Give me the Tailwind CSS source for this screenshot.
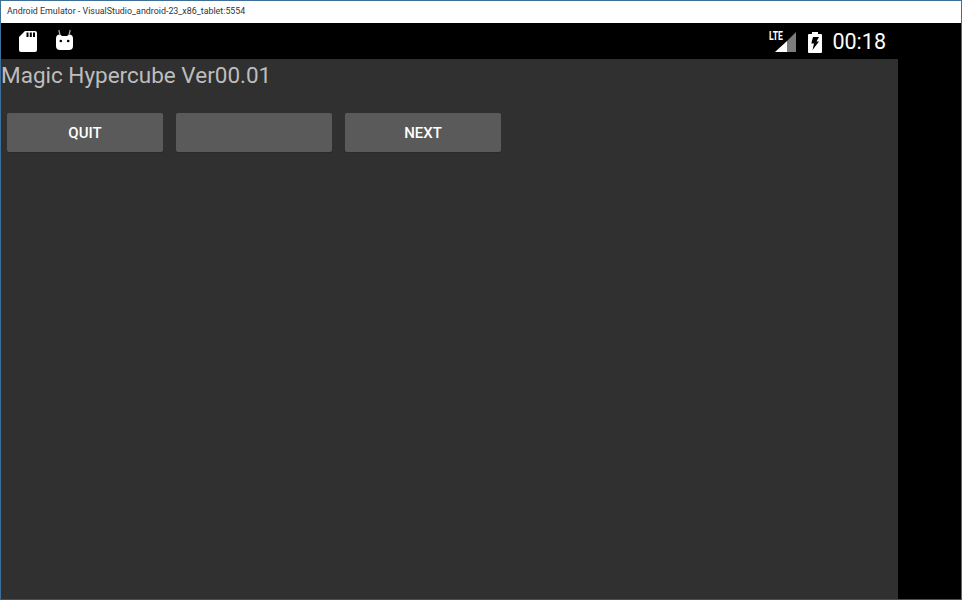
<!DOCTYPE html>
<html lang="en">

<head>
    <meta charset="UTF-8" />
    <meta name="viewport" content="width=device-width, initial-scale=1.0" />
    <title>Android Emulator</title>
    <script src="https://cdn.jsdelivr.net/npm/@tailwindcss/browser@4"></script>
</head>

<body class="bg-black overflow-hidden">
    <div class="w-[962px] h-[600px] flex flex-col border border-[#3f6f96] border-b-[#1f5a8a] font-['Roboto',sans-serif] overflow-hidden">
        <!-- window title bar -->
        <div class="h-[22px] shrink-0 bg-white flex items-center pl-[6px] text-[8.9px] text-[#333] font-['Roboto',sans-serif]">
            Android Emulator - VisualStudio_android-23_x86_tablet:5554
        </div>

        <div class="flex-1 flex flex-col bg-black">
            <!-- status bar -->
            <div class="h-[36px] shrink-0 flex items-center justify-between w-[897px]">
                <div class="flex items-center pl-[18px] gap-[19px]">
                    <svg class="mt-px" width="18" height="21" viewBox="0 0 18 21">
                        <path fill="#fff" d="M6 0h10a2 2 0 0 1 2 2v17a2 2 0 0 1-2 2H2a2 2 0 0 1-2-2V6z" />
                        <path fill="#000" d="M7.500 1.500h2v4.500h-2zM10.800 1.500h2v4.500h-2zM14 1.500h2v4.500h-2z" />
                    </svg>
                    <svg class="mb-[3px]" width="17" height="21" viewBox="0 0 17 21">
                        <path fill="#fff" d="M4 5.500l2 1.500h5l2-1.500a4 4 0 0 1 4 4V17a4 4 0 0 1-4 4H4a4 4 0 0 1-4-4V9.500a4 4 0 0 1 4-4z" />
                        <path fill="none" stroke="#b0b0b0" stroke-width="1.200" d="M2.800 1l1.200 5M14.200 1l-1.200 5" />
                        <circle cx="4.800" cy="12" r="1.300" fill="#000" />
                        <circle cx="12.200" cy="12" r="1.300" fill="#000" />
                    </svg>
                </div>
                <div class="flex items-center">
                    <div class="relative w-[27px] h-[22px] mr-[12px] mt-[2px]">
                        <svg class="absolute left-0 top-0" width="27" height="22" viewBox="0 0 27 22">
                            <path fill="#7d7d7d" d="M27 1v20H18V10z" />
                            <path fill="#fff" d="M18 10v11H6z" />
                        </svg>
                        <span class="absolute left-0 top-[-1px] text-[12px] leading-[12px] font-bold text-white scale-x-[.72] origin-left">LTE</span>
                    </div>
                    <svg class="mr-[10px] mt-[2px]" width="14" height="21" viewBox="0 0 14 21">
                        <path fill="#fff" d="M4 0h6v2h3a1 1 0 0 1 1 1v17a1 1 0 0 1-1 1H1a1 1 0 0 1-1-1V3a1 1 0 0 1 1-1h3z" />
                        <path fill="#000" d="M5 5h6L8.500 9.500H11L4.500 18l1.500-6.500H3.300z" />
                    </svg>
                    <span class="text-[21.5px] leading-none text-white mr-[12px] mt-[2px]">00:18</span>
                </div>
            </div>

            <div class="flex-1 flex">
                <!-- app content -->
                <div class="w-[897px] bg-[#303030]">
                    <h1 class="text-[22.5px] leading-[32px] text-[#bdbdbd] font-normal">Magic Hypercube Ver00.01</h1>
                    <div class="flex gap-[13px] pl-[6px] mt-[22px]">
                        <button class="w-[156px] h-[39px] pt-[2px] rounded-[2px] bg-[#5a5a5a] shadow-[0_1px_0_#2a2a2a] text-white text-[15px] font-medium">QUIT</button>
                        <button class="w-[156px] h-[39px] pt-[2px] rounded-[2px] bg-[#5a5a5a] shadow-[0_1px_0_#2a2a2a] text-white text-[15px] font-medium"></button>
                        <button class="w-[156px] h-[39px] pt-[2px] rounded-[2px] bg-[#5a5a5a] shadow-[0_1px_0_#2a2a2a] text-white text-[15px] font-medium">NEXT</button>
                    </div>
                </div>
            </div>
        </div>
    </div>
</body>

</html>
